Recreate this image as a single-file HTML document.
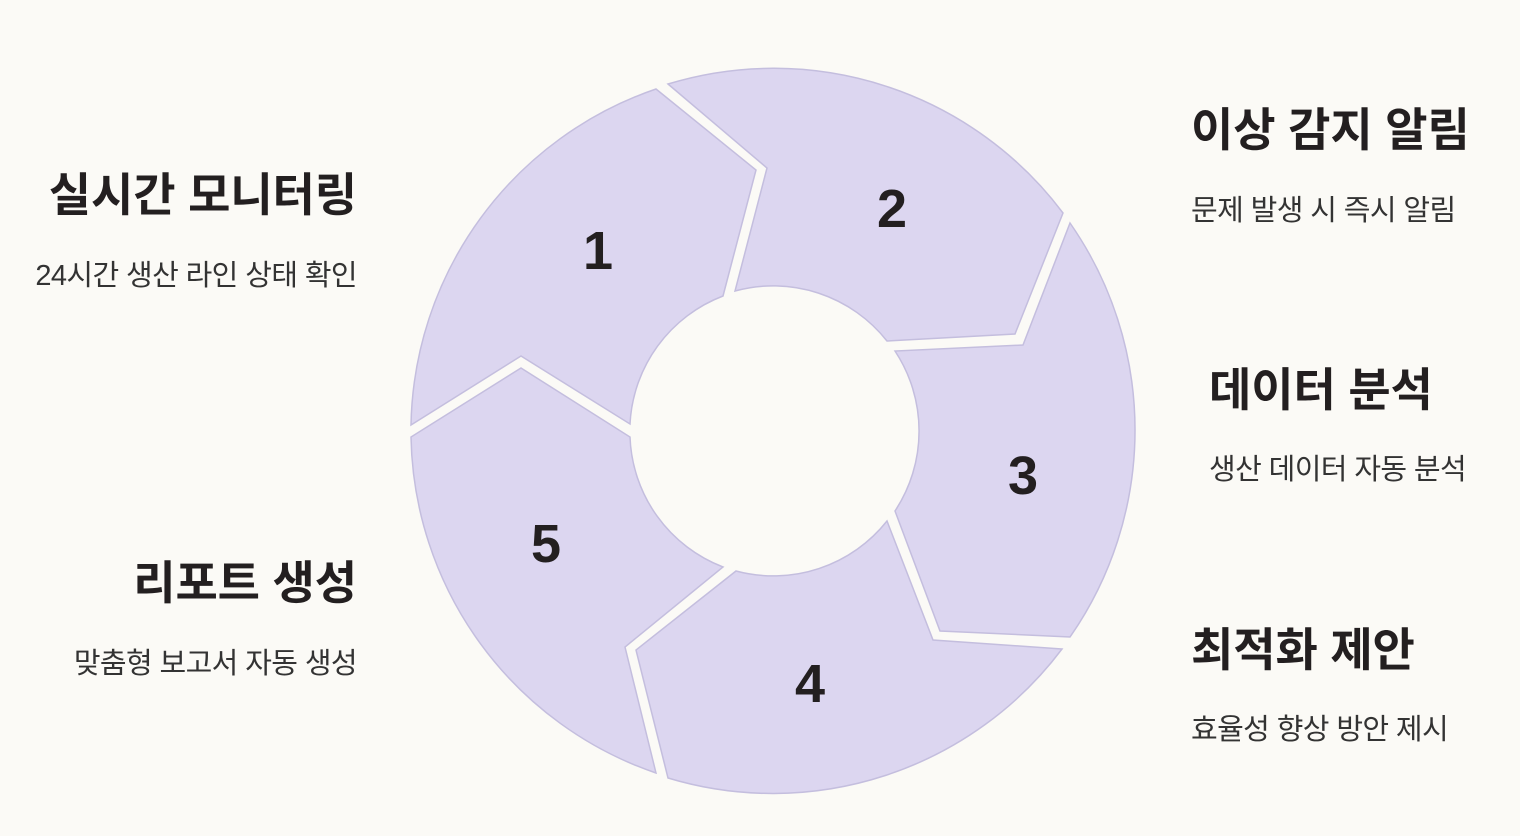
<!DOCTYPE html>
<html><head><meta charset="utf-8"><style>
body{margin:0;width:1520px;height:836px;background:#fbfaf6;overflow:hidden;position:relative;font-family:"Liberation Sans","Noto Sans CJK KR",sans-serif;}
.t{position:absolute;font-weight:bold;font-size:46px;color:#231f20;letter-spacing:-0.1px;line-height:1;white-space:nowrap}
.s{position:absolute;font-size:29px;color:#333;letter-spacing:-0.6px;line-height:1;white-space:nowrap}
.r{text-align:right;right:1163px}
svg{position:absolute;left:0;top:0}
</style></head><body>
<svg width="1520" height="836">
<g fill="#dcd6f0" stroke="#c4bede" stroke-width="1.5">
<path d="M411,425 L521,356 L630,424 A145,145 0 0 1 723,296 L756,170 L656,89 A362,362 0 0 0 411,425 Z"/>
<path d="M668,84 L767,168 L735,291 A145,145 0 0 1 887,341 L1015,334 L1063,213 A362,362 0 0 0 668,84 Z"/>
<path d="M1070,223 L1023,345 L895,351 A145,145 0 0 1 895,511 L940,631 L1070,637 A362,362 0 0 0 1070,223 Z"/>
<path d="M1062,649 L933,640 L887,521 A145,145 0 0 1 736,571 L636,650 L668,778 A362,362 0 0 0 1062,649 Z"/>
<path d="M656,773 L625,647 L723,567 A145,145 0 0 1 630,437 L521,368 L411,437 A362,362 0 0 0 656,773 Z"/>
</g>
<g font-family="Liberation Sans,sans-serif" font-weight="bold" font-size="54" fill="#231f20" text-anchor="middle">
<text x="598" y="269">1</text>
<text x="892" y="227">2</text>
<text x="1023" y="494">3</text>
<text x="810" y="702">4</text>
<text x="546" y="562">5</text>
</g>
</svg>
<div class="t r" style="top:172px">실시간 모니터링</div>
<div class="s r" style="top:262px">24시간 생산 라인 상태 확인</div>
<div class="t r" style="top:560px">리포트 생성</div>
<div class="s r" style="top:650px">맞춤형 보고서 자동 생성</div>
<div class="t" style="left:1191px;top:107px">이상 감지 알림</div>
<div class="s" style="left:1191px;top:197px">문제 발생 시 즉시 알림</div>
<div class="t" style="left:1209px;top:367px">데이터 분석</div>
<div class="s" style="left:1209px;top:456px">생산 데이터 자동 분석</div>
<div class="t" style="left:1191px;top:627px">최적화 제안</div>
<div class="s" style="left:1191px;top:716px">효율성 향상 방안 제시</div>
</body></html>
